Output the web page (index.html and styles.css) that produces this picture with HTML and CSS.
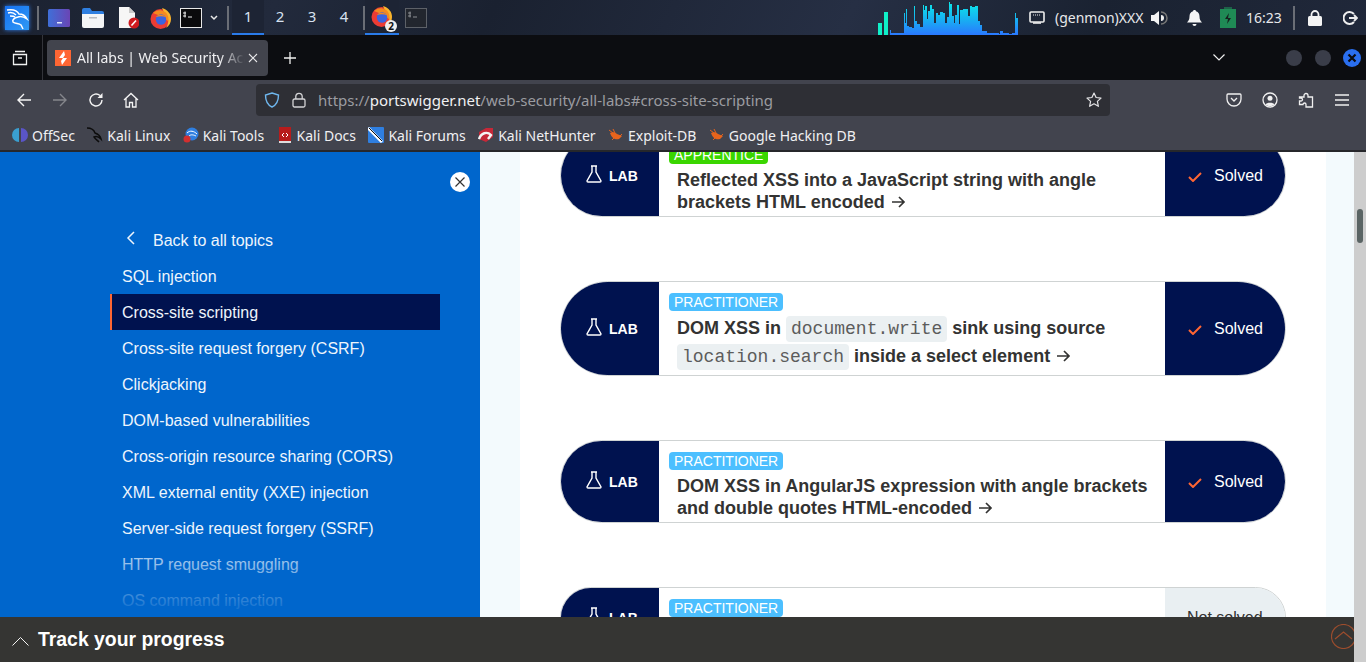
FILE: index.html
```html
<!DOCTYPE html>
<html lang="en">
<head>
	<meta charset="UTF-8">
	<title>All labs | Web Security Academy</title>
	<link rel="stylesheet" href="styles.css">
</head>
<body>
	<div id="panel">
		<svg class="kali" viewBox="0 0 24 24"><path fill="none" stroke="#fff" stroke-width="1.500" d="M2 4c6-1 10 0 12 4 3 0 6 1 8 5-3-2-6-3-9-2-4 1-6 3-5 5 2 2 6 1 8 3l2 4M3 7c3-1 6 0 8 2M5 10c2 0 4 0 5 1"/></svg>
		<i class="sep sep-a"></i>
		<svg class="ic desktop" viewBox="0 0 22 18"><defs><linearGradient id="dk" x1="0" x2="1"><stop offset="0" stop-color="#3f6fd8"/><stop offset="1" stop-color="#6a45b5"/></linearGradient></defs><rect width="22" height="18" y="0" rx="1.5" fill="url(#dk)"/><rect x="9" y="13" width="5" height="1.5" fill="#dfe6fa"/></svg>
		<svg class="ic folder" viewBox="0 0 22 20"><path d="M0 2q0-2 2-2h6l2 3h10q2 0 2 2v2H0z" fill="#2f7fe0"/><path d="M0 6h22v12q0 2-2 2H2q-2 0-2-2z" fill="#f4f5f6"/><rect x="7" y="9" width="8" height="1.5" fill="#b9bcc0"/></svg>
		<svg class="ic doc" viewBox="0 0 21 22"><path d="M1 0h10l6 6v15H1z" fill="#f6f6f6"/><path d="M11 0l6 6h-6z" fill="#c9c9c9"/><circle cx="16" cy="16" r="5.5" fill="#cf1a1f"/><path d="M13.5 18.5l4.5-5" stroke="#fff" stroke-width="1.6"/></svg>
		<svg class="ic fox" viewBox="0 0 22 22"><use href="#foxy"/></svg>
		<svg class="ic term" viewBox="0 0 22 20"><rect x=".5" y=".5" width="21" height="19" fill="#0a0a0c" stroke="#e8e8e8"/><path d="M3 5h3M3 8h3M5 3.500v6M8 9h4" stroke="#eee" fill="none"/></svg>
		<svg class="chev" viewBox="0 0 8 6"><path d="M1 1l3 3 3-3" fill="none" stroke="#e8e8e8" stroke-width="1.5"/></svg>
		<i class="sep sep-b"></i>
		<div class="ws">
			<span class="on">1</span>
			<span>2</span>
			<span>3</span>
			<span>4</span>
		</div>
		<i class="sep sep-c"></i>
		<div class="task">
			<svg viewBox="0 0 22 22"><defs><g id="foxy"><circle cx="10.500" cy="12" r="10" fill="#ec3c34"/><path d="M12 1c6 2 9 6 9 11 0 4-2 7-5 9 3-5 3-10 0-13-1-2-3-4-4-7z" fill="#f9b52c"/><path d="M3 6c3-3 8-4 12-1 3 2 4 6 3 9L8 8z" fill="#f58a1f"/><circle cx="11" cy="12.500" r="5.200" fill="#3b63e0"/><path d="M6 10c2-3 7-3 10 0-3-1-7-1-10 0z" fill="#f58a1f"/></g></defs><use href="#foxy"/></svg>
			<b>2</b>
		</div>
		<svg class="ic term2" viewBox="0 0 22 20"><rect x=".5" y=".5" width="21" height="19" fill="#22262e" stroke="#5d6168"/><path d="M3 5h3M3 8h3M5 3.500v6M8 9h4" stroke="#8b8e93" fill="none"/></svg>

		<svg class="graph" viewBox="0 0 140 34"><defs><linearGradient id="gr" x1="0" y1="0" x2="0" y2="1"><stop offset="0" stop-color="#0ce8e8"/><stop offset=".55" stop-color="#18aef2"/><stop offset="1" stop-color="#2a78ff"/></linearGradient></defs><rect x="0" y="22" width="4" height="12" fill="#0ff0c8"/><rect x="6" y="11" width="4" height="23" fill="#0ff0c8"/><path fill="url(#gr)" d="M12 34V29H13V32H26V12H27V22H28V8H29V25H31V26H34V27H36V5H37V20H39V23H42V26H45V4H46V9H47V5H49V18H50V10H52V4H54V8H56V22H58V12H60V14H62V11H65V12H67V22H69V16H71V1H72V3H74V15H76V22H77V14H79V4H81V23H82V9H85V8H88V8H90V15H92V5H94V6H97V5H100V20H102V24H104V30H109V32H121V33H122V30H125V32H131V33H134V32H137V12H138V17H140V34Z"/></svg>
		<svg class="net" viewBox="0 0 16 14"><rect x="1" y="1" width="14" height="10" rx="1" fill="none" stroke="#eee" stroke-width="1.6"/><path d="M4 12h8" stroke="#eee" stroke-width="1.6"/><path d="M4 4h8" stroke="#eee" stroke-dasharray="1 1"/></svg>
		<span class="genmon">(genmon)XXX</span>
		<svg class="vol" viewBox="0 0 17 16"><path d="M0 5h3l5-4v14l-5-4H0z" fill="#f4f4f4"/><path d="M10 2a6 6 0 0 1 0 12" fill="none" stroke="#777" stroke-width="1.5"/><path d="M10 5a3 3 0 0 1 0 6z" fill="#eee"/></svg>
		<svg class="bell" viewBox="0 0 15 16"><path d="M7.500 0c1 0 1.500.7 1.500 1.300 2.500.8 3.500 3 3.500 5.200 0 3 1 4.500 2.500 6H0c1.500-1.500 2.500-3 2.500-6 0-2.200 1-4.400 3.500-5.200C6 .7 6.500 0 7.500 0z" fill="#f4f4f4"/><path d="M5.500 14h4a2 2 0 0 1-4 0z" fill="#f4f4f4"/></svg>
		<svg class="batt" viewBox="0 0 16 21"><rect x="0" y="2" width="16" height="19" fill="#1f8a55"/><rect x="4" y="0" width="8" height="2" fill="#1f8a55" opacity=".6"/><path d="M9 6l-4 6h3l-1 5 4-6H8z" fill="#16211e"/></svg>
		<span class="clock">16:23</span>
		<i class="sep sep-d"></i>
		<svg class="plock" viewBox="0 0 14 16"><rect y="6" width="14" height="10" rx="1.500" fill="#f4f4f4"/><path d="M3.500 7V4.500a3.500 3.500 0 0 1 7 0V7" fill="none" stroke="#f4f4f4" stroke-width="1.800"/></svg>
		<svg class="logout" viewBox="0 0 15 14"><path d="M11 3a6 6 0 1 0 0 8" fill="none" stroke="#eee" stroke-width="2"/><path d="M6 7h7M11 4l3 3-3 3" fill="none" stroke="#eee" stroke-width="1.800"/></svg>
	</div>

	<div id="tabbar">
		<svg class="view" viewBox="0 0 16 16"><path d="M3 1.500h10M1.500 4.500h13v10h-13zM6 8h4" fill="none" stroke="#f0f0f0" stroke-width="1.300"/></svg>
		<i class="tabsep"></i>
		<div class="tab">
			<svg class="favicon" viewBox="0 0 16 16"><rect width="16" height="16" fill="#ff6633"/><path d="M9 1L4 8h4l-2 3 1 4 5-7H8l2-3z" fill="#fff"/></svg>
			<span class="tabtitle">All labs | Web Security Academy</span>
			<svg class="tabx" viewBox="0 0 10 10"><path d="M1 1l8 8M9 1l-8 8" stroke="#e8e8ea" stroke-width="1.100"/></svg>
		</div>
		<svg class="plus" viewBox="0 0 12 12"><path d="M6 0v12M0 6h12" stroke="#f0f0f0" stroke-width="1.300"/></svg>
		<svg class="tablist" viewBox="0 0 12 7"><path d="M.5.500L6 6 11.500.500" fill="none" stroke="#f0f0f0" stroke-width="1.200"/></svg>
		<i class="winbtn winfirst"></i>
		<i class="winbtn"></i>
		<svg class="winclose" viewBox="0 0 18 18"><circle cx="9" cy="9" r="9" fill="#2a6ff0"/><path d="M5.500 5.500l7 7M12.500 5.500l-7 7" stroke="#0b0c10" stroke-width="2.200"/></svg>
	</div>

	<div id="navbar">
		<svg class="tool back" viewBox="0 0 16 16"><path d="M15 8H2M8 2L2 8l6 6" fill="none" stroke="#f4f4f4" stroke-width="1.400"/></svg>
		<svg class="tool fwd" viewBox="0 0 16 16"><path d="M1 8h13M8 2l6 6-6 6" fill="none" stroke="#85868c" stroke-width="1.400"/></svg>
		<svg class="tool reload" viewBox="0 0 16 16"><path d="M14 8a6 6 0 1 1-2-4.500" fill="none" stroke="#f4f4f4" stroke-width="1.400"/><path d="M14.500 1v5h-5z" fill="#f4f4f4"/></svg>
		<svg class="tool home" viewBox="0 0 16 16"><path d="M1 8l7-6.500L15 8M3 6.500V15h3.500v-4.500h3V15H13V6.500" fill="none" stroke="#f4f4f4" stroke-width="1.300"/></svg>
		<div class="urlbar">
			<svg class="shield" viewBox="0 0 16 16"><path d="M8 1l6.500 2c0 6-2 10-6.500 12C3.500 13 1.500 9 1.500 3z" fill="none" stroke="#6fb7ee" stroke-width="1.400"/></svg>
			<svg class="padlock" viewBox="0 0 14 16"><rect x="1" y="7" width="12" height="8" rx="1.500" fill="none" stroke="#d4d4d6" stroke-width="1.300"/><path d="M3.800 7V4.500a3.200 3.200 0 0 1 6.400 0V7" fill="none" stroke="#d4d4d6" stroke-width="1.300"/></svg>
			<span class="url">https://<em>portswigger.net</em>/web-security/all-labs#cross-site-scripting</span>
			<svg class="star" viewBox="0 0 16 16"><path d="M8 1l2.100 4.500 4.900.6-3.600 3.300 1 4.900L8 11.800l-4.400 2.500 1-4.900L1 6.100l4.900-.6z" fill="none" stroke="#e4e4e6" stroke-width="1.200" stroke-linejoin="round"/></svg>
		</div>
		<svg class="tool pocket" viewBox="0 0 16 16"><path d="M2 2h12q1 0 1 1v4a7 7 0 0 1-14 0V3q0-1 1-1zM5 6l3 3 3-3" fill="none" stroke="#f0f0f0" stroke-width="1.300"/></svg>
		<svg class="tool account" viewBox="0 0 16 16"><circle cx="8" cy="8" r="7" fill="none" stroke="#f0f0f0" stroke-width="1.300"/><circle cx="8" cy="6.300" r="2.500" fill="#f0f0f0"/><path d="M3.500 12.500c1-2.500 8-2.500 9 0-2 2-7 2-9 0z" fill="#f0f0f0"/></svg>
		<svg class="tool puzzle" viewBox="0 0 16 16"><path d="M6 3.500a2 2 0 0 1 4 0V5h4.500v10H8v-2.500a1.500 1.500 0 0 0-3 0H1.500V9H3a1.500 1.500 0 0 0 0-3H1.500V5H6z" fill="none" stroke="#f0f0f0" stroke-width="1.300"/></svg>
		<svg class="tool menu" viewBox="0 0 16 16"><path d="M1 3h14M1 8h14M1 13h14" stroke="#f0f0f0" stroke-width="1.300"/></svg>
	</div>

	<div id="bookmarks">
		<a class="mark"><svg viewBox="0 0 16 16"><path d="M7 1a7 7 0 0 0 0 14z" fill="#3a9fd0"/><path d="M9 1a7 7 0 0 1 0 14z" fill="#5a55c8"/></svg>OffSec</a>
		<a class="mark"><svg viewBox="0 0 16 16"><path d="M0 1c5 0 7 2 8 5 3 1 5 2 6 6-3-3-5-3-7-2 1 2 3 3 5 5" fill="none" stroke="#0c0c0c" stroke-width="1.500"/></svg>Kali Linux</a>
		<a class="mark"><svg viewBox="0 0 16 16"><circle cx="9" cy="7" r="6.500" fill="#2f7fe0"/><path d="M4 6c3-3 7-2 10 1M6 9c2-2 5-1 7 0" stroke="#fff" fill="none"/><circle cx="4" cy="12" r="3.500" fill="#d32f2f"/></svg>Kali Tools</a>
		<a class="mark"><svg viewBox="0 0 16 16"><rect x="2" y="0" width="12" height="16" fill="#b71c1c"/><rect x="2" y="14" width="12" height="2" fill="#ddd"/><path d="M7 6L5 8l2 2M9 6l2 2-2 2" fill="none" stroke="#fff"/></svg>Kali Docs</a>
		<a class="mark"><svg viewBox="0 0 16 16"><rect width="16" height="16" rx="1" fill="#2f7fe0"/><path d="M0 1l14 14" stroke="#fff" stroke-width="3"/><path d="M1 1l13 13" stroke="#111"/></svg>Kali Forums</a>
		<a class="mark"><svg viewBox="0 0 16 16"><path d="M1 5l7-4h7v9l-7 5-7-3z" fill="#c62838"/><path d="M1 12c2-6 8-8 12-4l-3 4" fill="none" stroke="#f4f4f4" stroke-width="2.400"/></svg>Kali NetHunter</a>
		<a class="mark"><svg viewBox="0 0 16 16"><use href="#bug"/></svg>Exploit-DB</a>
		<a class="mark"><svg viewBox="0 0 16 16"><g id="bug"><path d="M2 6c2-1 5-1 7 1l5 2-3 3c-3 1-7 0-9-6z" fill="#e8641c"/><path d="M1 3l4 3M5 2l2 4M14 7l-3 3M4 13l3-3" stroke="#e8641c"/></g></svg>Google Hacking DB</a>
	</div>

	<div id="page">
		<div id="left">
			<div id="view">
				<div id="sidebar">
					<svg class="close" viewBox="0 0 20 20"><circle cx="10" cy="10" r="10" fill="#fff"/><path d="M5.500 5.500l9 9M14.500 5.500l-9 9" stroke="#333" stroke-width="1.200"/></svg>
					<ul class="topics">
						<li class="backlink"><svg viewBox="0 0 9 14"><path d="M8 1L2 7l6 6" fill="none" stroke="#eef5fc" stroke-width="1.500"/></svg><span>Back to all topics</span></li>
						<li>SQL injection</li>
						<li class="selected">Cross-site scripting</li>
						<li>Cross-site request forgery (CSRF)</li>
						<li>Clickjacking</li>
						<li>DOM-based vulnerabilities</li>
						<li>Cross-origin resource sharing (CORS)</li>
						<li>XML external entity (XXE) injection</li>
						<li>Server-side request forgery (SSRF)</li>
						<li>HTTP request smuggling</li>
						<li>OS command injection</li>
					</ul>
					<div class="fade"></div>
				</div>
				<div id="main">
					<div id="sheet">
						<div class="card">
							<div class="lab"><svg viewBox="0 0 16 18"><use href="#flask"/></svg>LAB</div>
							<div class="body">
								<span class="level apprentice">APPRENTICE</span>
								<div class="title">Reflected XSS into a JavaScript string with angle brackets HTML encoded <svg class="arrow" viewBox="0 0 14 12"><use href="#arrow"/></svg></div>
							</div>
							<div class="status"><svg viewBox="0 0 14 10"><use href="#tick"/></svg>Solved</div>
						</div>
						<div class="card">
							<div class="lab"><svg viewBox="0 0 16 18"><defs><path id="flask" d="M5 1h6M6 1v6L1 16q0 1 1 1h12q1 0 1-1L10 7V1" fill="none" stroke="#fff" stroke-width="1.400"/><path id="arrow" d="M0 6h12M7 1l5 5-5 5" fill="none" stroke="#333332" stroke-width="1.700"/><path id="tick" d="M1 5l4 4 8-8" fill="none" stroke="#ff6633" stroke-width="2"/></defs><use href="#flask"/></svg>LAB</div>
							<div class="body">
								<span class="level practitioner">PRACTITIONER</span>
								<div class="title tall">DOM XSS in <code>document.write</code> sink using source <code>location.search</code> inside a select element <svg class="arrow" viewBox="0 0 14 12"><use href="#arrow"/></svg></div>
							</div>
							<div class="status"><svg viewBox="0 0 14 10"><use href="#tick"/></svg>Solved</div>
						</div>
						<div class="card">
							<div class="lab"><svg viewBox="0 0 16 18"><use href="#flask"/></svg>LAB</div>
							<div class="body">
								<span class="level practitioner">PRACTITIONER</span>
								<div class="title">DOM XSS in AngularJS expression with angle brackets and double quotes HTML-encoded <svg class="arrow" viewBox="0 0 14 12"><use href="#arrow"/></svg></div>
							</div>
							<div class="status"><svg viewBox="0 0 14 10"><use href="#tick"/></svg>Solved</div>
						</div>
						<div class="card">
							<div class="lab"><svg viewBox="0 0 16 18"><use href="#flask"/></svg>LAB</div>
							<div class="body">
								<span class="level practitioner">PRACTITIONER</span>
								<div class="title">Reflected DOM XSS <svg class="arrow" viewBox="0 0 14 12"><use href="#arrow"/></svg></div>
							</div>
							<div class="status unsolved">Not solved</div>
						</div>
					</div>
				</div>
			</div>
			<div id="progress">
				<svg class="up" viewBox="0 0 17 10"><path d="M.5 9.500L8.500 1.500l8 8" fill="none" stroke="#f4f4f4"/></svg>
				<span>Track your progress</span>
				<svg class="top" viewBox="0 0 24 25"><circle cx="12.500" cy="12.500" r="12" fill="none" stroke="#9c4d2d" stroke-width="1.200"/><path d="M4 15l8.500-7 8.500 7" fill="none" stroke="#9c4d2d" stroke-width="1.200"/></svg>
			</div>
		</div>
		<div id="scroll"><i></i></div>
	</div>
</body>
</html>
```
FILE: styles.css
```css
*{
	margin: 0;
	padding: 0;
	box-sizing: border-box;
}
ul{
	list-style: none;
}
i, em{
	font-style: normal;
}
svg{
	display: block;
	flex: none;
}
html, body{
	height: 662px;
	overflow: hidden;
}
body{
	display: flex;
	flex-direction: column;
	font-family: "Liberation Sans", Arial, sans-serif;
}

/* desktop panel */
#panel{
	height: 35px;
	display: flex;
	align-items: center;
	padding-right: 8px;
	color: #e8e8ea;
	font: 14px "Noto Sans", sans-serif;
	background: linear-gradient(115deg, #1b2231 0, #222a3c 20%, #1a2130 36%, #262f44 62%, #1a2231 80%, #20283a 100%);
}
.kali{
	width: 24px;
	height: 24px;
	margin-left: 5px;
	background: linear-gradient(135deg, #1670f0, #2f9af5);
	box-shadow: 0 0 4px #2f7ff0;
}
.sep{
	width: 2px;
	height: 24px;
	background: #6a6e76;
}
.sep-a{ margin-left: 8px; }
.sep-b{ margin-left: 9px; }
.sep-c{ margin-left: 3px; }
.sep-d{ margin-left: 12px; }
.ic{
	width: 22px;
	height: 20px;
}
.desktop{ margin-left: 9px; height: 18px; }
.folder{ margin-left: 12px; }
.doc{ margin-left: 14px; width: 21px; height: 22px; }
.fox{ margin-left: 11px; height: 22px; }
.term{ margin-left: 8px; }
.chev{ margin-left: 8px; width: 8px; height: 6px; }
.ws{
	display: flex;
	height: 35px;
	margin-left: 3px;
}
.ws span{
	width: 32px;
	line-height: 33px;
	text-align: center;
	font-size: 15px;
	color: #d8e2f0;
}
.ws .on{
	border-bottom: 2px solid #2a7bea;
	background: #1d2434;
}
.task{
	width: 34px;
	height: 35px;
	padding: 5px 6px 0;
	position: relative;
	border-bottom: 2px solid #2a7bea;
	background: #1d2434;
}
.task b{
	position: absolute;
	left: 20px;
	top: 20px;
	width: 12px;
	height: 12px;
	border-radius: 50%;
	background: #eee;
	color: #111;
	font-size: 10px;
	line-height: 12px;
	text-align: center;
}
.term2{ margin-left: 6px; }
.graph{
	width: 140px;
	height: 34px;
	margin-left: auto;
}
.net{ margin-left: 11px; width: 16px; height: 14px; }
.genmon{ margin-left: 10px; width: 88px; font-size: 14px; white-space: nowrap; }
.vol{ margin-left: 8px; width: 17px; height: 16px; }
.bell{ margin-left: 19px; width: 15px; height: 16px; }
.batt{ margin-left: 18px; width: 16px; height: 21px; }
.clock{ margin-left: 10px; width: 35px; font-size: 14px; }
.plock{ margin-left: 13px; width: 14px; height: 16px; }
.logout{ margin-left: 21px; width: 15px; height: 14px; }

/* browser tabs */
#tabbar{
	height: 45px;
	display: flex;
	align-items: center;
	background: #0c0d11;
}
.view{
	width: 16px;
	height: 16px;
	margin-left: 12px;
}
.tabsep{
	width: 1px;
	height: 45px;
	margin-left: 14px;
	background: #33343a;
}
.tab{
	width: 221px;
	height: 36px;
	margin-left: 4px;
	padding: 0 10px 0 8px;
	display: flex;
	align-items: center;
	border-radius: 4px;
	background: #42444d;
}
.favicon{
	width: 16px;
	height: 16px;
}
.tabtitle{
	width: 168px;
	margin-left: 6px;
	overflow: hidden;
	white-space: nowrap;
	color: #f0f0f2;
	font: 14px "Noto Sans", sans-serif;
	-webkit-mask-image: linear-gradient(to right, #000 85%, transparent);
	mask-image: linear-gradient(to right, #000 85%, transparent);
}
.tabx{
	width: 10px;
	height: 10px;
	margin-left: auto;
}
.plus{
	width: 12px;
	height: 12px;
	margin-left: 16px;
}
.tablist{
	width: 12px;
	height: 7px;
	margin-left: auto;
}
.winbtn{
	width: 16px;
	height: 16px;
	margin-left: 13px;
	border-radius: 50%;
	background: #3a3d49;
}
.winfirst{
	margin-left: 61px;
}
.winclose{
	width: 18px;
	height: 18px;
	margin: 0 5px 0 12px;
}

/* browser toolbar */
#navbar{
	height: 40px;
	display: flex;
	align-items: center;
	background: #42444e;
}
.tool{
	width: 16px;
	height: 16px;
}
.back{ margin-left: 16px; }
.fwd{ margin-left: 20px; }
.reload{ margin-left: 20px; }
.home{ margin-left: 19px; }
.urlbar{
	width: 854px;
	height: 32px;
	margin-left: 117px;
	padding: 0 8px;
	display: flex;
	align-items: center;
	border-radius: 4px;
	background: #2e2f35;
}
.shield{
	width: 16px;
	height: 16px;
}
.padlock{
	width: 14px;
	height: 16px;
	margin-left: 12px;
}
.url{
	margin-left: 12px;
	color: #9b9ca1;
	font: 15px "Noto Sans", sans-serif;
	white-space: nowrap;
}
.url em{
	color: #f0f0f2;
}
.star{
	width: 16px;
	height: 16px;
	margin-left: auto;
}
.pocket{ margin-left: 116px; }
.account{ margin-left: 20px; }
.puzzle{ margin-left: 20px; }
.menu{ margin-left: 20px; }

#bookmarks{
	height: 32px;
	padding-left: 12px;
	display: flex;
	align-items: center;
	background: #42444e;
	border-bottom: 2px solid #26272b;
	color: #f0f0f2;
	font: 14px "Noto Sans", sans-serif;
}
.mark{
	display: flex;
	align-items: center;
	margin-right: 12.4px;
	white-space: nowrap;
}
.mark svg{
	width: 16px;
	height: 16px;
	margin-right: 4px;
}

/* page */
#page{
	height: 510px;
	display: flex;
}
#left{
	flex: 1;
	min-width: 0;
	display: flex;
	flex-direction: column;
}
#view{
	height: 465px;
	display: flex;
	overflow: hidden;
}
#sidebar{
	width: 480px;
	padding: 70px 0 0 110px;
	position: relative;
	background: #0066cc;
	color: #eef5fc;
	font-size: 16px;
}
.close{
	position: absolute;
	left: 450px;
	top: 20px;
	width: 20px;
	height: 20px;
}
.topics{
	width: 330px;
}
.topics li{
	height: 36px;
	padding-left: 12px;
	line-height: 38px;
	white-space: nowrap;
}
.topics .backlink{
	display: flex;
	align-items: center;
	padding-left: 16px;
}
.backlink span{
	padding-top: 2px;
}
.backlink svg{
	width: 9px;
	height: 14px;
	margin: -4px 18px 0 0;
}
.topics .selected{
	padding-left: 10px;
	border-left: 2px solid #ff6633;
	background: #00124f;
}
.fade{
	position: absolute;
	left: 0;
	right: 0;
	bottom: 0;
	height: 85px;
	background: linear-gradient(to bottom, rgba(0,102,204,0), #0066cc);
}
#main{
	flex: 1;
	padding: 0 28px 0 40px;
	background: #f3fafd;
}
#sheet{
	display: flow-root;
	height: 100%;
	padding: 0 40px;
	background: #fff;
}
.card{
	display: flex;
	margin-bottom: 64px;
	border: 1px solid #cfd3d3;
	border-radius: 48px;
	overflow: hidden;
	color: #333332;
}
.card:first-child{
	margin-top: -18px;
}
.lab{
	width: 98px;
	padding-left: 25px;
	display: flex;
	align-items: center;
	background: #00124f;
	color: #fff;
	font-size: 14px;
	font-weight: bold;
}
.lab svg{
	width: 16px;
	height: 18px;
	margin: -4px 7px 0 0;
}
.body{
	flex: 1;
	padding: 11px 0 0 10px;
}
.level{
	display: block;
	width: fit-content;
	height: 18px;
	padding: 0 5px;
	border-radius: 4px;
	color: #fff;
	font-size: 14px;
	line-height: 18px;
}
.apprentice{
	background: #3ad600;
}
.practitioner{
	background: #4cbfff;
}
.title{
	margin: 5px 0 3px 8px;
	font-size: 18px;
	font-weight: bold;
	line-height: 22px;
}
.tall{
	margin: 3px 0 5px 8px;
	line-height: 28px;
}
.title code{
	padding: 3px 5px;
	border-radius: 4px;
	background: #ebf0f2;
	color: #5c5c5c;
	font: 18px "Liberation Mono", monospace;
}
.arrow{
	display: inline-block;
	width: 14px;
	height: 12px;
	margin-left: 2px;
}
.status{
	width: 120px;
	padding-left: 23px;
	display: flex;
	align-items: center;
	background: #00124f;
	color: #fff;
	font-size: 16px;
}
.status svg{
	width: 14px;
	height: 10px;
	margin: 2px 12px 0 0;
}
.status.unsolved{
	padding-left: 22px;
	background: #e9eff2;
	color: #333332;
}
#progress{
	height: 45px;
	display: flex;
	align-items: center;
	overflow: hidden;
	padding-left: 12px;
	background: #353533;
	color: #fff;
	font-size: 19.4px;
	font-weight: bold;
}
.up{
	width: 17px;
	height: 10px;
	margin: 2px 9px 0 0;
}
.top{
	width: 24px;
	height: 25px;
	margin: -6px -1px 0 auto;
}
#scroll{
	width: 12px;
	padding: 57px 3px 0;
	background: #cdcdcd;
}
#scroll i{
	display: block;
	height: 34px;
	border-radius: 3px;
	background: #5a6464;
}
```
